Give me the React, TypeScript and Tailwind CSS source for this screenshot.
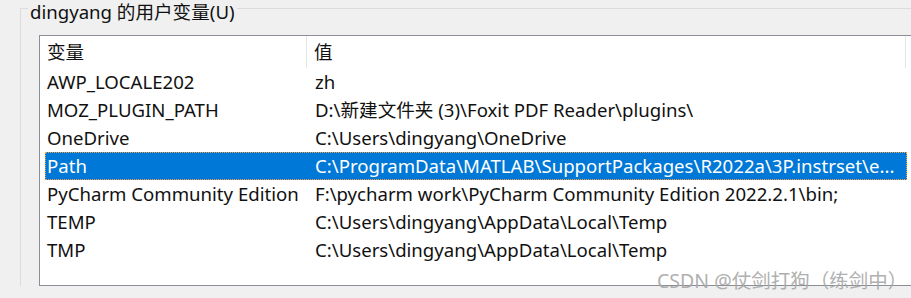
const rows = [
  { name: 'AWP_LOCALE202', value: 'zh' },
  { name: 'MOZ_PLUGIN_PATH', value: 'D:\\新建文件夹 (3)\\Foxit PDF Reader\\plugins\\' },
  { name: 'OneDrive', value: 'C:\\Users\\dingyang\\OneDrive' },
  { name: 'Path', value: 'C:\\ProgramData\\MATLAB\\SupportPackages\\R2022a\\3P.instrset\\e...', selected: true },
  { name: 'PyCharm Community Edition', value: 'F:\\pycharm work\\PyCharm Community Edition 2022.2.1\\bin;' },
  { name: 'TEMP', value: 'C:\\Users\\dingyang\\AppData\\Local\\Temp' },
  { name: 'TMP', value: 'C:\\Users\\dingyang\\AppData\\Local\\Temp' },
]

const font = "font-['Noto_Sans','Noto_Sans_CJK_SC',sans-serif]"

export default function App() {
  return (
    <div className={`relative h-[298px] w-[911px] overflow-hidden bg-[#f0f0f0] text-[18.6px] text-[#111] ${font}`}>
      <fieldset className="-mt-[5px] ml-[20px] border-l border-t border-[#dcdcdc]">
        <legend className="ml-[7px] px-[2px] pt-[7px] leading-[20px]">dingyang 的用户变量(U)</legend>

        <div className="ml-[18px] mt-[13px] h-[251px] w-[900px] border border-[#8a8e96] bg-white">
          <div className="flex h-[32px] items-center">
            <div className="flex h-full w-[267px] items-center border-r border-[#e5e5e5] pl-[7px]">变量</div>
            <div className="flex h-full w-[599px] items-center border-r border-[#e5e5e5] pl-[7px]">值</div>
          </div>

          <div className="flex flex-col pl-[5px]">
            {rows.map((r) => (
              <div
                key={r.name}
                className={
                  r.selected
                    ? 'flex h-[28px] w-[862px] items-center border border-dotted border-[#f5a142] bg-[#0078d7] text-white'
                    : 'flex h-[28px] w-[862px] items-center border border-transparent'
                }
              >
                <div className="w-[261px] whitespace-nowrap pl-[1px]">{r.name}</div>
                <div className="flex-1 whitespace-nowrap pl-[8px]">{r.value}</div>
              </div>
            ))}
          </div>
        </div>
      </fieldset>

      <div className="absolute left-[657px] top-[266px] whitespace-nowrap text-[19.5px] text-[#a8a8a8] opacity-90">
        CSDN @仗剑打狗（练剑中）
      </div>
    </div>
  )
}
